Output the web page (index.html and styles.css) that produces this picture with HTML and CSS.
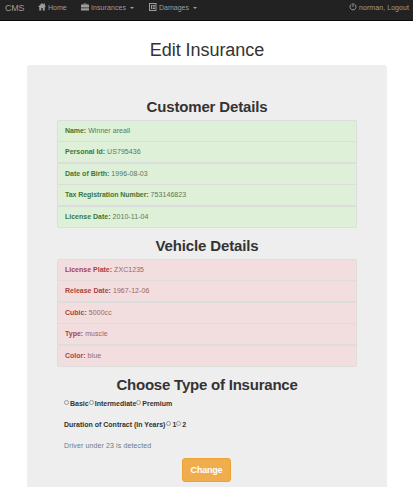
FILE: index.html
```html
<!DOCTYPE html>
<html lang="en">
<head>
<meta charset="utf-8">
<title>Edit Insurance</title>
<link rel="stylesheet" href="styles.css">
</head>
<body>
<nav class="navbar">
  <a class="brand">CMS</a>
  <a class="link home"><svg class="icon" viewBox="0 0 16 16"><path d="M8 0 0 8h2.500v7H6.500v-5h3v5h4V8H16l-2-2V1h-2.500v2.500z"/></svg><span>Home</span></a>
  <a class="link insurances"><svg class="icon" viewBox="0 0 16 16"><path d="M5 3V1h6v2h4q1 0 1 1v5H0V4q0-1 1-1zm1.500 0h3v-.8h-3zM0 10.500h16V15H0z"/></svg><span>Insurances</span><i class="caret"></i></a>
  <a class="link damages"><svg class="icon" viewBox="0 0 16 16"><path fill-rule="evenodd" d="M0 0h15v16H0zM2 2v12h11V2zM4 4h2v8H4zm3 0h5v2H7zm0 3h5v2H7zm0 3h5v2H7z"/></svg><span>Damages</span><i class="caret"></i></a>
  <a class="link logout"><svg class="icon" viewBox="0 0 16 16"><path d="M5 2.500a6 6 0 1 0 6 0M8 0v7.500" fill="none" stroke="currentColor" stroke-width="2"/></svg><span>norman, Logout</span></a>
</nav>
<main class="container">
  <h1>Edit Insurance</h1>
  <section class="jumbotron">
    <h2 class="customer-title">Customer Details</h2>
    <ul class="list success">
      <li><b class="name">Name:</b> Winner areall</li>
      <li><b>Personal Id:</b> US795436</li>
      <li><b>Date of Birth:</b> 1996-08-03</li>
      <li><b class="tax">Tax Registration Number:</b> 753146823</li>
      <li><b>License Date:</b> 2010-11-04</li>
    </ul>
    <h2>Vehicle Details</h2>
    <ul class="list danger">
      <li><b>License Plate:</b> ZXC1235</li>
      <li><b>Release Date:</b> 1967-12-06</li>
      <li><b>Cubic:</b> 5000cc</li>
      <li><b>Type:</b> muscle</li>
      <li><b>Color:</b> blue</li>
    </ul>
    <h2 class="choose-title">Choose Type of Insurance</h2>
    <form>
      <div class="row"><i class="radio"></i><b>Basic</b><i class="radio"></i><b>Intermediate</b><i class="radio"></i><b>Premium</b></div>
      <div class="row"><b class="duration">Duration of Contract (In Years)</b><i class="radio"></i><b>1</b><i class="radio"></i><b>2</b></div>
      <div class="row notice">Driver under 23 is detected</div>
      <button type="button">Change</button>
    </form>
  </section>
</main>
</body>
</html>
```
FILE: styles.css
```css
* { box-sizing: border-box; }
body { margin: 0; height: 487px; overflow: hidden; background: #fff; color: #333; font: 7px/10px "Liberation Sans", Arial, sans-serif; }
.navbar { display: flex; height: 21px; padding: 2px 4px 0 5px; background: #222; border-bottom: 1px solid #080808; color: #9d9d9d; line-height: 12px; }
.brand { width: 33px; font-size: 9px; letter-spacing: -.3px; }
.link { display: flex; height: 12px; align-items: center; }
.icon { width: 8px; height: 8px; margin: -2px 2px 0 0; fill: currentColor; }
.home { width: 43px; }
.insurances { width: 68px; letter-spacing: .08px; }
.logout { margin-left: auto; letter-spacing: .07px; }
.caret { margin-left: 4px; border: 2px solid transparent; border-top-color: currentColor; border-bottom: 0; }
.container { width: 360px; margin: 0 auto 0 27px; }
h1, h2 { margin: 0; text-align: center; }
h1 { height: 44px; padding-top: 18px; font-size: 18px; line-height: 22px; font-weight: 400; letter-spacing: -.05px; }
.jumbotron { height: 430px; padding: 30px 30px 0; background: #eee; border-radius: 3px; }
h2 { height: 31px; padding-top: 9px; font-size: 15px; line-height: 18px; letter-spacing: -.15px; }
.customer-title { height: 25px; padding-top: 3px; }
.choose-title { letter-spacing: -.22px; }
.list { display: grid; grid-template-rows: 21px 22px 21px 22px 22px; height: 108px; margin: 0; padding: 0; list-style: none; border: 1px solid #ddd; border-radius: 2px; overflow: hidden; }
li { padding: 5px 7px 0; border-bottom: 1px solid #ddd; letter-spacing: .06px; }
li b { letter-spacing: 0; }
li .name { letter-spacing: -.05px; }
li .tax { letter-spacing: -.06px; }
li:nth-child(2), li:nth-child(4) { border-bottom-width: 2px; }
li:last-child { border-bottom: 0; }
.success { background: #dff0d8; color: #55795a; }
.success b { color: #3c763d; }
.danger { background: #f2dede; color: #a06463; }
.danger b { color: #a94442; }
form { margin-top: -5px; padding: 0 7px; }
.row { display: flex; align-items: center; height: 21px; }
.radio { flex: none; width: 5px; height: 5px; margin: -2px 1px 0 0; border: 1px solid #999; border-radius: 50%; background: #eee; }
.duration { margin-right: 1px; }
.notice { color: #6b7d88; letter-spacing: .12px; }
button { display: block; width: 49px; height: 24px; margin: 2px 0 0 118px; padding: 0; border: 1px solid #eea236; border-radius: 3px; background: #f0ad4e; color: #fff; font: bold 9px/20px "Liberation Sans", Arial, sans-serif; letter-spacing: -.2px; }
```
